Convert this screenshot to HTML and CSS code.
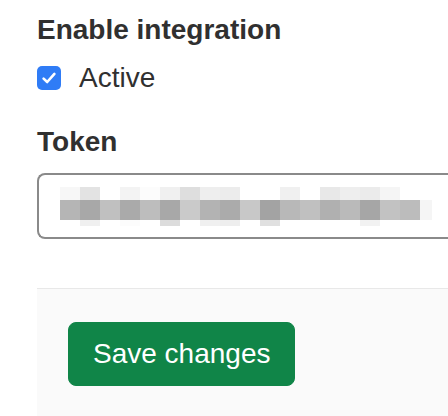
FILE: index.html
```html
<!DOCTYPE html>
<html lang="en">
  <head>
    <meta charset="UTF-8" />
    <meta name="viewport" content="width=device-width, initial-scale=1.0" />
    <title>Integration settings</title>
    <link rel="stylesheet" href="styles.css">
  </head>
  <body>
    <div class="form">
      <div class="form-group">
        <div class="label">Enable integration</div>
        <label class="checkbox-row">
          <span class="checkbox">
            <svg width="18" height="18" viewBox="0 0 18 18">
              <path d="M3.6 9.6 L7.2 13 L14.4 4.9" fill="none" stroke="#fff" stroke-width="2.6" stroke-linecap="round" stroke-linejoin="round"/>
            </svg>
          </span>
          Active
        </label>
      </div>

      <div class="form-group token-group">
        <div class="label">Token</div>
        <div class="token-field">
          <div class="mosaic" id="mosaic"></div>
        </div>
      </div>

      <div class="form-actions">
        <button class="btn-save">Save changes</button>
      </div>
    </div>

    <script>
      // blurred token, one row of grey values per band
      const rows = [
        { h: 13, shades: [247, 227, 255, 243, 252, 240, 222, 238, 236, 255, 255, 240, 255, 232, 238, 235, 245, 255, 255] },
        { h: 20, shades: [181, 168, 192, 170, 189, 168, 202, 179, 171, 200, 163, 184, 192, 176, 186, 166, 194, 188, 245] },
        { h: 6, shades: [255, 240, 255, 252, 255, 220, 255, 240, 238, 255, 224, 255, 255, 255, 255, 242, 255, 255, 255] }
      ];
      const mosaic = document.getElementById("mosaic");
      rows.forEach((row) => {
        const band = document.createElement("div");
        band.className = "band";
        band.style.height = row.h + "px";
        row.shades.forEach((v, i) => {
          const cell = document.createElement("span");
          cell.className = i === row.shades.length - 1 ? "cell cell-end" : "cell";
          cell.style.background = `rgb(${v}, ${v}, ${v})`;
          band.appendChild(cell);
        });
        mosaic.appendChild(band);
      });
    </script>
  </body>
</html>
```

FILE: styles.css
```css
body {
  margin: 0;
  padding: 0;
  font-family: "Liberation Sans", Arial, sans-serif;
  color: #303030;
  background-color: #fff;
}
.form {
  padding: 10px 0 0 37px;
}
.form-group {
  margin-bottom: 24px;
}
.label {
  font-size: 28px;
  font-weight: bold;
  line-height: 40px;
}
.checkbox-row {
  display: flex;
  align-items: center;
  gap: 18px;
  margin-top: 8px;
  font-size: 28px;
  line-height: 40px;
}
.checkbox {
  width: 24px;
  height: 24px;
  border-radius: 5px;
  background-color: #2f7cf6;
  display: flex;
  align-items: center;
  justify-content: center;
}
.token-group {
  margin-bottom: 49px;
}
/* the field runs on past the right edge of the view */
.token-field {
  margin-top: 11px;
  height: 50px;
  border: 2px solid #8a8a8a;
  border-right: none;
  border-radius: 8px 0 0 8px;
  padding: 12px 0 0 21px;
}
.mosaic {
  display: flex;
  flex-direction: column;
}
.band {
  display: flex;
}
.cell {
  width: 20px;
}
.cell-end {
  width: 12px;
}
.form-actions {
  background-color: #fafafa;
  border-top: 1px solid #e8e8e8;
  padding: 33px 31px 30px;
}
.btn-save {
  display: block;
  height: 64px;
  padding: 0 24px;
  border: 1px solid #108548;
  border-radius: 8px;
  background-color: #108548;
  color: #fff;
  font-family: "Liberation Sans", Arial, sans-serif;
  font-size: 28px;
  cursor: pointer;
}
```
